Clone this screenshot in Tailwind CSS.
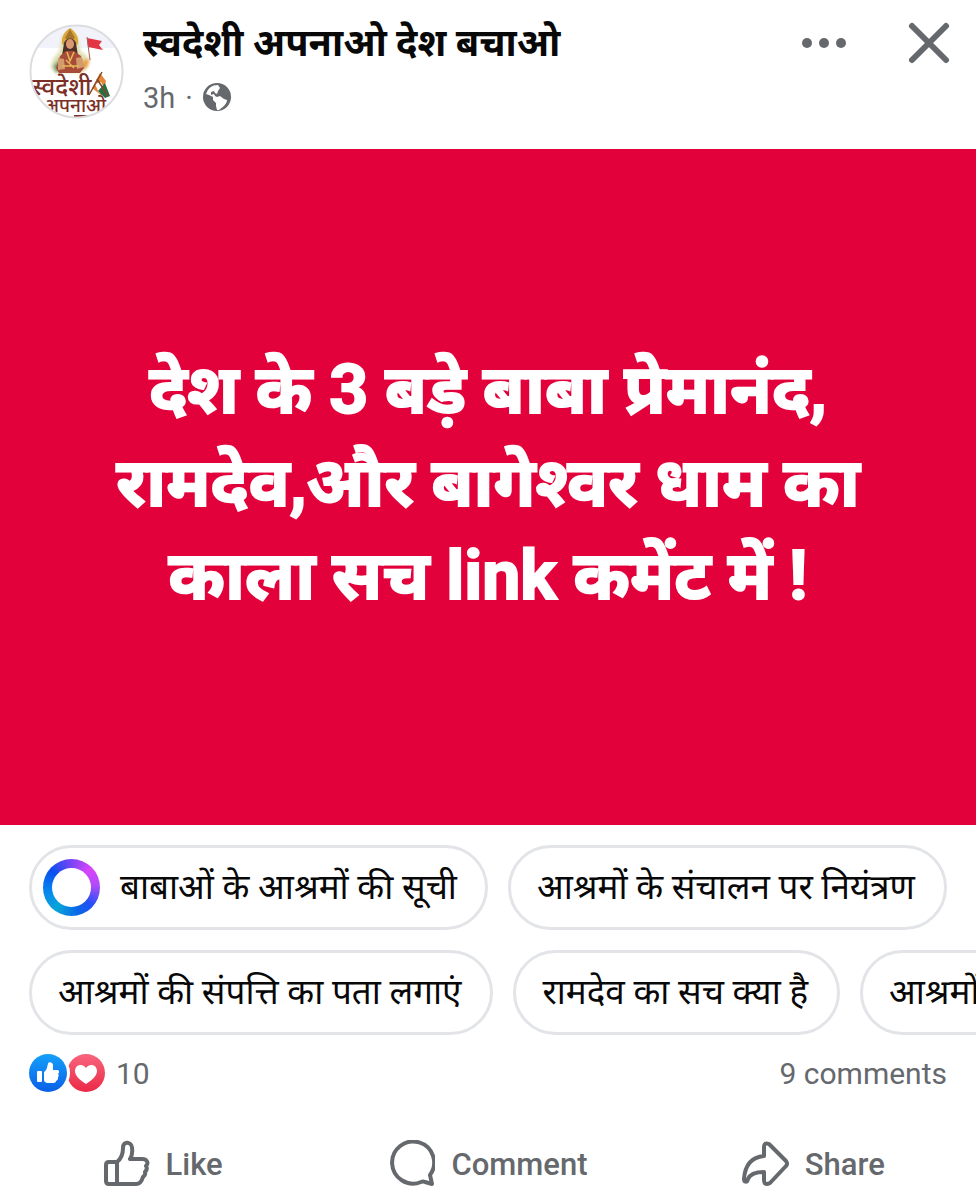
<!DOCTYPE html>
<html>
<head>
<meta charset="utf-8">
<meta name="viewport" content="width=device-width, initial-scale=1">
<title>स्वदेशी अपनाओ देश बचाओ</title>
<script src="https://cdn.jsdelivr.net/npm/@tailwindcss/browser@4"></script>
</head>
<body class="min-h-screen overflow-x-hidden bg-white font-[Roboto,'Noto_Sans',sans-serif] text-[#080809]">
<article>
  <header class="flex h-[149px] items-start pl-[29px] pr-6">
    <a href="#" aria-label="स्वदेशी अपनाओ" class="mt-6 block shrink-0">
      <svg class="size-[95px]" viewBox="0 0 95 95" font-family="Noto Sans, sans-serif" font-weight="500" fill="#7b2f26">
        <defs><clipPath id="av"><circle cx="47.500" cy="47.500" r="46"/></clipPath>
        <filter id="soft"><feGaussianBlur stdDeviation="1.500"/></filter></defs>
        <g clip-path="url(#av)">
          <rect width="95" height="95" fill="#fff"/>
          <rect width="95" height="24" fill="#f2f2fa"/>
          <g filter="url(#soft)">
            <path d="M22 44c0-8 4-12 8-16l3-16 8-5 8 7 3 14c7 3 9 7 7 14l-5 7H26z" fill="#dfe0b4"/>
            <path d="M24 42l7-7 2 10-6 4z" fill="#6e9f76"/>
            <path d="M54 36l7-1-3 9-7 2z" fill="#e7a03f"/>
          </g>
          <path d="M33 20c-1-7 2-12 8-16 6 4 9 9 8 16l-8 4z" fill="#d9a93f"/>
          <path d="M36 14l5-9 5 9-5 4z" fill="#a8752d"/>
          <path d="M35 19c2-6 10-6 12 0l2 13H33z" fill="#503129"/>
          <ellipse cx="41" cy="20" rx="4" ry="5" fill="#d99973"/>
          <path d="M37 27h8l7 5 3 12-4 5H30l-3-5 4-12z" fill="#a94b39"/>
          <path d="M29 34l6 1 1 10-7 1zM47 34l6-1 2 10-7 2z" fill="#d39a6c"/>
          <path d="M38 28l3 9 4-9M33 42h17M37 36l8 8" stroke="#e3bb58" stroke-width="1.500" fill="none"/>
          <path d="M58 14l15 3-3 4 4 5-15-3z" fill="#e23645"/>
          <path d="M58 13l3 23" stroke="#a4605a" fill="none"/>
          <text x="3" y="71" font-size="24">स्वदेशी</text>
          <text x="15" y="88" font-size="19">अपनाओ</text>
          <path d="M31 92h4m10 0h15M49 92v3M57 92v3" stroke="#7b2f26" stroke-width="2" fill="none"/>
          <path d="M63 64l8-15 6 8-4 15z" fill="#e6873b"/>
          <path d="M66 60l6-2 4 8-6 3z" fill="#fff"/>
          <path d="M69 67l7-8 5 13-5 2z" fill="#267044"/>
          <path d="M60 71l13-23M79 72L68 55" stroke="#7d4a2c" stroke-width="1.500" fill="none"/>
        </g>
        <circle cx="47.500" cy="47.500" r="46" fill="none" stroke="#dcdde0" stroke-width="2"/>
      </svg>
    </a>
    <div class="ml-[19px] mt-4 min-w-0 flex-1">
      <h1 class="whitespace-nowrap text-[38px] leading-[54px] font-bold"><a href="#">स्वदेशी अपनाओ देश बचाओ</a></h1>
      <div class="mt-[2px] flex h-[50px] items-center text-[29px] text-[#65686c]">
        <a href="#" class="pt-1">3h</a><span class="mx-[10px] pt-1">·</span>
        <svg class="size-7" viewBox="0 0 28 28" role="img" aria-label="Public"><circle cx="14" cy="14" r="14" fill="#65686c"/><path d="M3 11C5 5 9 2 15 2l2 3-2 3-1 3-2-1-1-2-3 1 0 3 3-1 1 2 2 1 3-1 4 3 3 1c0 3-2 4-3 6l-5 4-2 0-1-4 0-3-3-3 0-3-4-2z" fill="#fff"/></svg>
      </div>
    </div>
    <div class="mt-5 flex items-center gap-[60px]">
      <button type="button" aria-label="More options" class="p-0"><svg class="h-12 w-11" viewBox="0 0 44 48" fill="#65686c"><circle cx="5" cy="23" r="5"/><circle cx="22" cy="23" r="5"/><circle cx="39" cy="23" r="5"/></svg></button>
      <button type="button" aria-label="Close"><svg class="size-[46px]" viewBox="0 0 46 46" fill="none" stroke="#65686c" stroke-width="6" stroke-linecap="round"><path d="M6 5l34 34M40 5L6 39"/></svg></button>
    </div>
  </header>

  <section class="flex h-[676px] items-center justify-center bg-[#e2013b] px-[100px] pb-2">
    <p class="text-center text-[68px] leading-[93px] font-bold text-white [-webkit-text-stroke:2px_white]">देश के 3 बड़े बाबा प्रेमानंद,<br>रामदेव,और <span lang="sa">बागेश्वर</span> धाम का<br>काला सच link कमेंट में !</p>
  </section>

  <section class="flex flex-col gap-5 overflow-hidden py-5 pl-[29px] text-[35px] leading-[79px] whitespace-nowrap">
    <div class="flex gap-5">
      <button type="button" class="flex shrink-0 items-center gap-5 rounded-full border-3 border-[#e2e4e8] pr-[28px] pl-[11px]">
        <span class="size-[57px] rounded-full bg-[conic-gradient(from_0deg,#7a45f5,#d944fb_45deg,#b04bf8_85deg,#2450f5_130deg,#0866e8_165deg,#08a5d8_215deg,#0788ee_260deg,#0a4ff0_310deg,#7a45f5)] p-[9px]"><span class="block size-full rounded-full bg-white"></span></span>
        <span>बाबाओं के आश्रमों की सूची</span>
      </button>
      <button type="button" class="shrink-0 rounded-full border-3 border-[#e2e4e8] pl-[26px] pr-[29px]">आश्रमों के संचालन पर नियंत्रण</button>
    </div>
    <div class="flex gap-5">
      <button type="button" class="shrink-0 rounded-full border-3 border-[#e2e4e8] pl-[26px] pr-[29px]">आश्रमों की संपत्ति का पता लगाएं</button>
      <button type="button" class="shrink-0 rounded-full border-3 border-[#e2e4e8] pl-[26px] pr-[29px]">रामदेव का सच क्या है</button>
      <button type="button" class="shrink-0 rounded-full border-3 border-[#e2e4e8] pl-[26px] pr-[29px]">आश्रमों की सूची</button>
    </div>
  </section>

  <div class="flex h-9 items-center justify-between px-[29px] text-[30px] text-[#65686c]">
    <a href="#" class="flex items-center">
      <svg class="h-[38px] w-[77px]" viewBox="0 0 77 38" role="img" aria-label="Like and Love">
        <defs>
          <linearGradient id="lk" x1="0" y1="0" x2="0" y2="1"><stop stop-color="#14a0fa"/><stop offset="1" stop-color="#0b5fe6"/></linearGradient>
          <linearGradient id="lv" x1="0" y1="0" x2="0" y2="1"><stop stop-color="#f9657c"/><stop offset="1" stop-color="#ea2947"/></linearGradient>
        </defs>
        <circle cx="57" cy="19" r="19" fill="url(#lv)"/>
        <circle cx="19" cy="19" r="22" fill="#fff"/>
        <circle cx="19" cy="19" r="19" fill="url(#lk)"/>
        <rect x="8" y="17" width="5" height="11" rx="1" fill="#fff"/>
        <path d="M15 18c3-2 3-5 4-8 0-3 5-2 5 1v5h4c2 0 3 2 1 4 1 1 1 2 0 3 0 2 0 3-2 4 0 1-1 2-3 2h-5c-2 0-4-1-4-3z" fill="#fff"/>
        <path d="M57 30c-6-4-11-8-11-13 0-7 8-8 11-3 3-5 11-4 11 3 0 5-5 9-11 13z" fill="#fff"/>
      </svg>
      <span class="ml-[10px]">10</span>
    </a>
    <a href="#">9 comments</a>
  </div>

  <div class="mt-9 flex h-[72px] items-center text-[31px] font-medium text-[#65686c]">
    <button type="button" class="flex flex-1 items-center justify-center gap-4">
      <svg class="size-[47px]" viewBox="0 0 47 47" fill="none" stroke="#65686c" stroke-width="4" stroke-linejoin="round" stroke-linecap="round"><path d="M14 22H6q-3 0-3 3v16q0 3 3 3h8zM14 22c5-4 6-9 6-14 0-8 9-6 9 0q1 6-2 11h12c5 0 7 4 4 7q2 3-1 6q1 3-2 5q-2 7-7 7H14"/></svg>
      <span class="pt-1">Like</span>
    </button>
    <button type="button" class="flex flex-1 items-center justify-center gap-4">
      <svg class="size-[47px]" viewBox="0 0 47 47" fill="none" stroke="#65686c" stroke-width="4" stroke-linejoin="round"><path d="M42 35A21 21 0 1 0 33 42q2-1 4 0l7 2z"/></svg>
      <span class="pt-1">Comment</span>
    </button>
    <button type="button" class="flex flex-1 items-center justify-center gap-4">
      <svg class="size-[47px]" viewBox="0 0 47 47" fill="none" stroke="#65686c" stroke-width="4" stroke-linejoin="round"><path d="M22 16V7q0-5 5-3l17 17q2 3 0 5L28 43q-6 3-6-3v-8c-9 0-14 2-16 7-1 4-4 3-4 0C3 25 10 17 22 16z"/></svg>
      <span class="pt-1">Share</span>
    </button>
  </div>
</article>
</body>
</html>
